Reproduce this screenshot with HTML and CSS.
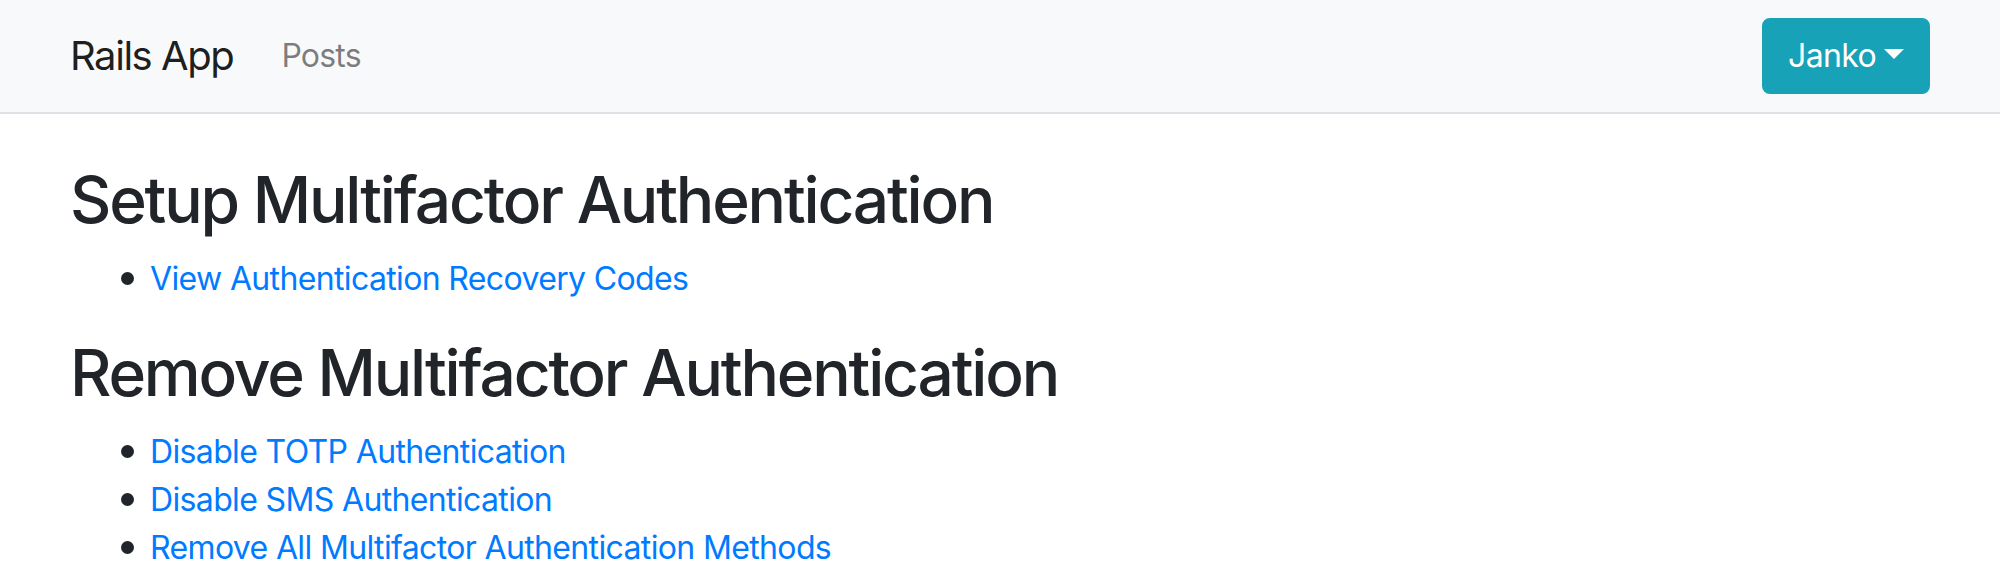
FILE: index.html
```html
<!DOCTYPE html>
<html lang="en">
<head>
<meta charset="utf-8">
<title>Rails App</title>
<link rel="stylesheet" href="styles.css">
</head>
<body>
<nav class="navbar">
  <div class="navbar-inner">
    <a class="brand" href="#">Rails App</a>
    <a class="nav-link" href="#">Posts</a>
    <div class="spacer"></div>
    <button class="btn-user" type="button">Janko<span class="caret"></span></button>
  </div>
</nav>
<main class="content">
  <h2 class="title">Setup Multifactor Authentication</h2>
  <ul class="links">
    <li><a href="#">View Authentication Recovery Codes</a></li>
  </ul>
  <h2 class="title title-second">Remove Multifactor Authentication</h2>
  <ul class="links">
    <li><a href="#">Disable TOTP Authentication</a></li>
    <li><a href="#">Disable SMS Authentication</a></li>
    <li><a href="#">Remove All Multifactor Authentication Methods</a></li>
  </ul>
</main>
</body>
</html>
```
FILE: styles.css
```css
html, body {
  margin: 0;
  padding: 0;
  background: #fff;
}
body {
  font-family: Inter, "Liberation Sans", sans-serif;
  color: #212529;
  font-size: 32px;
  line-height: 48px;
  letter-spacing: -0.02em;
}
.navbar {
  background: #f8f9fa;
  border-bottom: 2px solid #dee2e6;
  height: 112px;
  box-sizing: content-box;
}
.navbar-inner {
  height: 112px;
  padding: 0 70px;
  display: flex;
  align-items: center;
}
.brand {
  font-size: 40px;
  line-height: 60px;
  letter-spacing: -0.036em;
  color: rgba(0,0,0,.9);
  text-decoration: none;
  margin-right: 32px;
}
.nav-link {
  font-size: 32px;
  line-height: 48px;
  letter-spacing: -0.025em;
  color: rgba(0,0,0,.5);
  text-decoration: none;
  padding: 0 16px;
}
.spacer { flex: 1; }
.btn-user {
  font-family: inherit;
  font-size: 32px;
  line-height: 48px;
  letter-spacing: -0.02em;
  color: #fff;
  background: #17a2b8;
  border: 2px solid #17a2b8;
  border-radius: 8px;
  padding: 12px 24px;
  display: inline-flex;
  align-items: center;
}
.caret {
  display: inline-block;
  margin-left: 8px;
  width: 0;
  height: 0;
  border-top: 10px solid #fff;
  border-left: 10px solid transparent;
  border-right: 10px solid transparent;
  margin-top: -4px;
}
.content {
  padding: 0 70px;
}
.title {
  font-size: 64px;
  font-weight: 500;
  line-height: 1.2;
  letter-spacing: -0.034em;
  margin: 48px 0 16px;
}
.title-second {
  margin-top: 0;
}
.links {
  margin: 0 0 32px;
  padding-left: 80px;
  list-style: none;
}
.links li::before {
  content: "";
  display: inline-block;
  width: 13px;
  height: 13px;
  border-radius: 50%;
  background: #212529;
  margin-left: -29px;
  margin-right: 16px;
  vertical-align: 5px;
}
.links a {
  color: #007bff;
  text-decoration: none;
}
```
